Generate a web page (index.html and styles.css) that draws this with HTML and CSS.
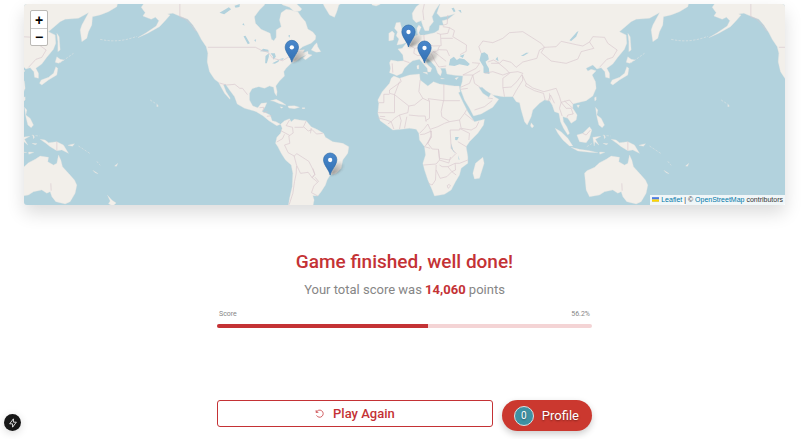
FILE: index.html
```html
<!DOCTYPE html>
<html lang="en">
<head>
  <meta charset="UTF-8">
  <meta name="viewport" content="width=device-width, initial-scale=1.0">
  <title>Game finished</title>
  <link rel="stylesheet" href="styles.css">
</head>
<body>
  <main class="page">
    <section class="map">
      <svg class="map-tiles" viewBox="72 12 2286 603" preserveAspectRatio="xMidYMid slice" role="img" aria-label="World map">
        <defs>
          <linearGradient id="pin-fill" x1="0" y1="0" x2="0" y2="1">
            <stop offset="0" stop-color="#4a88cb"/>
            <stop offset="1" stop-color="#3270b4"/>
          </linearGradient>
          <linearGradient id="shade-fill" x1="0" y1="1" x2="1" y2="0">
            <stop offset="0" stop-color="#444" stop-opacity=".6"/>
            <stop offset="1" stop-color="#555" stop-opacity=".05"/>
          </linearGradient>
          <filter id="soft"><feGaussianBlur stdDeviation="3"/></filter>

          <!-- tip of the pin is at 0,0 -->
          <g id="pin">
            <path d="M0 0 8-20Q16-38 32-38Q46-34 36-18Q26-3 0 0Z" fill="url(#shade-fill)" filter="url(#soft)"/>
            <path d="M0 0C-3-15-20-30-20-46A20 20 0 0 1 20-46C20-30 3-15 0 0Z" fill="url(#pin-fill)" stroke="#2f6ca8" stroke-width="2"/>
            <circle cy="-45" r="6.5" fill="#fff"/>
          </g>

          <g id="world">
            <!-- Americas -->
            <g transform="translate(540 0)">
              <g class="land">
                <path d="M-100 0L-115 22-103 38-110 48-85 58-72 52-62 62-70 78-100 98-125 113-95 100-60 80-43 62-28 45-35 42-20 40 5 50 25 58 40 75 55 98 65 118 80 140 85 160 83 185 90 215 105 238 117 247 125 262 135 280 151 298 152 294 140 275 132 255 138 253 150 270 165 290 173 312 195 325 230 335 250 347 268 362 280 370 292 377 303 373 290 365 278 362 272 345 258 338 248 335 258 318 262 308 245 310 235 323 220 318 210 300 210 280 218 266 238 260 255 265 270 258 282 262 285 278 291 288 293 275 289 258 300 243 315 228 313 215 320 205 335 190 350 183 365 172 381 164 370 174 378 179 398 165 386 162 385 154 370 158 375 149 358 150 370 140 395 130 408 118 409 107 400 96 385 87 378 65 365 50 355 35 335 30 320 28 305 38 300 60 305 80 290 90 290 112 283 122 276 118 272 100 245 88 228 70 225 50 240 30 255 15 260 0Z"/>
                <path d="M292 0 310 15 330 22 345 35 362 33 367 27 350 10 345 0ZM395 150L405 135 412 128 415 140 424 155 410 157ZM425 0L435 20 450 45 465 52 472 35 478 15 500 0ZM572 0 578 15 590 18 602 13 605 0ZM273 302L290 298 310 308 320 316 300 311 283 304ZM325 318L345 317 360 322 345 326 328 324ZM302 320 311 322 305 325ZM368 323 376 323 376 326 368 326Z"/>
                <path d="M303 373L315 362 330 356 335 365 345 357 360 360 380 362 395 380 412 388 432 400 438 412 460 425 490 430 508 440 505 460 490 480 485 505 470 520 452 525 443 540 438 555 425 575 415 588 400 587 404 600 400 620 326 620 330 595 338 560 340 520 335 495 318 480 305 460 295 440 288 430 292 412 303 400 308 385Z"/>
              </g>
              <path class="lake" d="M242 154 251 146 266 149 268 155ZM257 190 258 168 268 160 268 170 262 190ZM273 160 286 160 289 170 281 179 280 169ZM278 190 299 179 297 185 286 191ZM298 178 313 174 310 179ZM192 109 198 107 211 130 205 133ZM120 38 148 22 155 28 134 43ZM165 17 181 12 180 21 168 23ZM188 73 193 70 195 77ZM224 120 230 118 228 126ZM326 107 332 104 330 113Z"/>
              <path class="border" d="M1 0V50L18 57 35 74 49 94M85 142H228L246 151 266 157 280 175 309 182 331 169 342 153 360 153M120 249 141 255 166 253 181 265 189 265 204 284M240 323 253 322 250 333M252 338 264 335M262 349 276 347M330 360 320 377 339 382 341 399 328 408 331 430 315 435 326 458 344 468 352 461 388 484 399 506 406 523 398 533 386 517 363 520 351 495 344 468M351 498 350 521 345 545 340 580 329 614M304 392 330 406M380 363 372 380 386 393 398 389 411 402 430 400M345 382 372 382M395 384 393 400M407 532 417 544 403 558 396 578 415 588M400 505 406 523 398 533 414 546M292 426 309 416 315 403"/>
            </g>

            <!-- Europe, Africa and Asia -->
            <g transform="translate(1080 0)">
              <g class="land">
                <path d="M195 0L170 20 158 40 160 58 170 68 185 62 190 78 196 92 208 92 210 80 222 65 218 50 228 30 243 8 238 22 232 40 243 52 265 48 285 42 265 58 248 62 252 76 240 76 238 90 225 98 205 103 195 105 182 105 178 98 185 82 178 75 172 85 175 105 165 108 150 115 140 130 128 145 115 147 122 155 130 165 132 182 115 184 94 180 90 188 93 205 90 218 103 223 112 227 128 220 135 205 150 190 160 182 170 180 180 178 190 190 203 205 205 216 213 216 217 205 205 195 198 180 200 172 215 185 228 200 235 220 243 228 247 215 243 205 258 205 262 222 285 226 310 228 308 245 303 262 303 268 315 300 330 325 342 348 365 342 400 322 418 298 405 290 395 280 388 292 370 280 358 262 368 262 380 272 400 285 430 290 460 290 470 305 480 308 485 330 495 365 503 375 515 350 520 330 540 310 555 300 570 302 578 315 585 335 598 340 603 365 612 385 625 405 630 400 622 380 612 365 610 350 625 355 635 370 650 360 653 345 640 325 640 312 655 308 680 302 700 288 710 265 708 245 698 225 710 212 695 208 685 213 680 205 700 195 712 207 725 203 736 215 738 232 750 235 750 220 742 205 760 192 775 172 795 148 802 130 800 105 780 95 815 65 830 58 870 55 900 38 880 75 875 90 880 125 895 115 900 95 910 75 912 50 935 45 960 35 985 20 990 0Z"/>
                <path d="M103 228L120 235 150 225 180 222 182 240 205 258 222 245 240 252 262 255 285 258 299 258 302 275 297 278 312 310 325 335 340 358 345 365 375 358 372 375 355 400 330 425 320 440 325 470 325 490 305 505 300 525 288 545 275 570 255 583 225 588 218 570 205 540 195 510 190 490 198 465 195 440 180 420 178 400 170 388 150 385 125 388 100 390 80 375 62 362 55 340 58 310 55 300 68 275 90 250 95 235Z"/>
                <path d="M370 472L374 490 360 535 345 537 340 520 348 490ZM110 68L105 85 114 96 110 107 118 117 112 135 130 132 145 125 140 105 128 90 122 67ZM88 100L98 93 105 100 102 120 88 123ZM515 368L523 378 518 384 513 378ZM587 385L605 395 625 415 640 438 630 438 610 420 595 400ZM635 442L660 448 690 452 715 458 690 457 655 453ZM652 405L670 400 690 380 697 390 690 415 680 428 660 425ZM700 412L724 409 708 418 718 435 706 425 704 438ZM708 322L715 330 712 345 725 355 735 375 728 383 718 375 712 350ZM705 293 710 290 710 300 706 303ZM652 316 660 315 656 323ZM190 217 203 217 204 223ZM172 197 178 195 178 207 173 207ZM243 234 255 236 246 237ZM286 235 297 231 291 239ZM733 404 738 411 735 416ZM730 430 746 431 740 434ZM720 456 736 457 721 463Z"/>
              </g>
              <path class="lake" d="M268 196 272 178 283 170 292 180 300 175 315 178 331 192 325 198 300 193 285 198ZM365 160 360 180 372 200 372 218 390 222 388 205 382 195 378 185 388 178 385 164 375 157ZM300 168 315 163 310 174ZM408 178 414 170 417 184ZM484 168 500 158 508 158 492 168ZM630 121 652 96 657 93 650 110 635 123ZM287 411 298 411 293 421 287 420ZM275 430 281 450 287 461 283 456 275 445ZM297 466 300 480 297 478ZM276 25 283 23 288 34 283 37ZM296 31 304 30 306 40Z"/>
              <path class="border" d="M132 182 150 188M98 190 100 218M150 135 165 145 163 160 175 167 193 164M165 145 178 143 184 155M193 105 195 130 222 138 245 137 243 103 232 99M195 130 183 143M243 103 265 100 270 83 250 80M270 83 285 92 280 110 321 135 320 154 302 164M245 115 280 115M240 138 235 149 262 150 270 168M220 153 236 165 260 184M215 160 226 183 238 201 260 198M219 157 237 151M190 33 193 60M197 0 190 33M265 45 263 72 250 76M338 188 360 190 350 205 310 225 340 225 362 212M340 225 345 250 362 262M303 262 330 250 340 225M303 268 325 265M345 330 375 320 398 302M385 294 400 296M365 160 358 140 370 123 400 128 430 115 450 98 490 95 545 130 555 142 540 150 532 175 490 186 470 202 455 187 430 180 420 190 402 180 385 186M395 190 418 190 442 210 450 220 430 235 430 260 435 290M375 220 400 215 430 225 450 218 475 215 490 220 472 245 455 261 430 263M460 290 470 272 490 240 488 225 500 250 520 264 553 275 572 270 590 265 600 290 605 307 630 300 640 312M500 250 498 258 525 272 552 280M552 280 557 300M570 280 572 301M565 305 573 285 585 310M605 307 600 325 608 348M605 307 620 325 635 325 641 342 625 345 622 353M615 303 640 325M555 142 590 140 605 124 650 134 670 138 690 126 703 145 665 155 655 177 620 190 575 183 545 158ZM690 126 700 110 735 112 745 130 773 150 760 172 742 178 720 202M670 400 680 405 693 390"/>
              <path class="border" d="M122 235 125 245 90 270 90 280 105 284 105 338 55 338M120 245 105 284 148 318 165 315 190 295 178 275 182 240M58 308H73V283H90M190 295 210 304 210 355 198 362M210 304 206 296 253 302V252M253 302H301M252 302 245 335 247 350 270 365 300 360 315 340 322 328M315 340 342 362M300 360 305 385 335 390 350 382 358 365M270 365 255 370 235 380 212 388 205 372 195 385 180 400M148 318 145 338 120 345 105 355 95 365 80 360 55 353M95 365 103 387M120 345 125 362 120 387M142 350 135 385M148 345 178 348 197 348 200 365M182 404 195 402 216 393 215 405 205 430 195 440 212 445M212 390 216 410 200 434M216 410 205 430 218 447 237 448 240 480 230 492 192 495M237 448 240 475 270 480 290 460 275 445 272 390M272 390 300 390 302 385M295 425 320 440M240 480 268 489 273 471M230 495 228 540 218 555 207 550M230 510 242 535 262 530 277 515 265 500 248 500 240 495M265 500 287 490 300 490 325 480M287 490 288 510 277 515 290 525M263 557 269 553 273 558 266 565ZM300 385 330 400 328 420M61 349 77 350M85 372 95 365"/>
            </g>

            <!-- Japan, Oceania -->
            <g transform="translate(1620 0)">
              <g class="land">
                <path d="M135 520L142 512 165 502 180 488 200 478 215 468 240 472 238 485 255 495 265 490 270 465 277 480 282 500 300 520 318 540 325 555 320 580 305 605 290 612 262 605 250 590 245 575 235 580 220 570 195 575 180 585 150 590 140 570Z"/>
                <path d="M215 418L230 420 240 428 265 425 285 435 300 460 280 450 265 452 245 440 232 430ZM213 250L218 240 240 232 255 220 262 200 268 205 265 225 240 240 220 255ZM260 187L265 170 275 178 287 180 270 190ZM265 100L272 110 275 150 268 155 268 125ZM417 586 430 600 443 609 433 618 420 611 425 603ZM298 436 318 431 312 439ZM438 498 448 490 444 499ZM373 511 389 521 380 518ZM565 314 570 318 565 320Z"/>
              </g>
              <path class="border" d="M265 425V452M247 550 248 572"/>
              <path class="isles" d="M274 189 315 160M330 438 365 461M385 484 395 496M545 300 568 315M395 118C440 128 475 120 505 109M142 440 158 430M190 406 213 408"/>
            </g>
          </g>
        </defs>
        <use href="#world" x="-1713"/>
        <use href="#world"/>
        <use href="#world" x="1713"/>
        <use href="#pin" x="877" y="187"/>
        <use href="#pin" x="1227" y="141"/>
        <use href="#pin" x="1275" y="189"/>
        <use href="#pin" x="992" y="525"/>
      </svg>

      <div class="zoom">
        <button class="zoom-button" aria-label="Zoom in">+</button>
        <button class="zoom-button" aria-label="Zoom out">−</button>
      </div>

      <div class="attribution">
        <svg class="flag" viewBox="0 0 12 8" aria-hidden="true"><path fill="#4c7be1" d="M0 0h12v4H0z"/><path fill="#ffd500" d="M0 4h12v3H0z"/><path fill="#e0bc00" d="M0 7h12v1H0z"/></svg>
        <a href="#">Leaflet</a> | © <a href="#">OpenStreetMap</a> contributors
      </div>
    </section>

    <section class="result">
      <h1 class="result-title">Game finished, well done!</h1>
      <p class="result-text">Your total score was <strong>14,060</strong> points</p>

      <div class="score-labels">
        <label for="score">Score</label>
        <span>56.2%</span>
      </div>
      <progress class="score-bar" id="score" value="56.2" max="100"></progress>

      <div class="actions">
        <button class="play-button">
          <svg class="play-icon" viewBox="0 0 24 24" aria-hidden="true"><path d="M3 3v6h6M3.5 9A9.5 9.5 0 1 1 4 17"/></svg>
          Play Again
        </button>
        <a class="profile-button" href="#">
          <span class="level">0</span>
          Profile
        </a>
      </div>
    </section>
  </main>

  <button class="dev-button" aria-label="Open dev tools">
    <svg class="dev-icon" viewBox="0 0 24 24" aria-hidden="true"><path d="M13 2 4 14h7v8l9-12h-7z"/></svg>
  </button>
</body>
</html>
```
FILE: styles.css
```css
* {
    margin: 0;
    padding: 0;
    box-sizing: border-box;
}

body {
    background-color: #fff;
    font-family: "Roboto", sans-serif;
    color: #868686;
}

button {
    font-family: inherit;
    cursor: pointer;
}

.page {
    padding: 4px 21px 8px 24px;
}

/* Map */
.map {
    position: relative;
    height: 201px;
    border-radius: 3px;
    background-color: #b2d2dd;
    box-shadow: 0 8px 18px rgba(0, 0, 0, 0.14);
}

.map-tiles {
    display: block;
    width: 100%;
    height: 100%;
    border-radius: 3px;
}

.land {
    fill: #f2efea;
    stroke: #e3e5e2;
    stroke-width: 1;
    stroke-linejoin: round;
}

.lake {
    fill: #b2d2dd;
}

.border {
    fill: none;
    stroke: #d9c8cf;
    stroke-width: 2;
    stroke-linejoin: round;
}

.isles {
    fill: none;
    stroke: #dce3e2;
    stroke-width: 2;
    stroke-dasharray: 7 4;
}

.zoom {
    position: absolute;
    top: 6px;
    left: 6px;
    display: flex;
    flex-direction: column;
    width: 18px;
    border: 1px solid #bbb9b5;
    border-radius: 2px;
    background-color: #fff;
}

.zoom-button {
    height: 17px;
    border: none;
    background: none;
    font: bold 14px/16px "Liberation Sans", sans-serif;
    color: #000;
}

.zoom-button + .zoom-button {
    border-top: 1px solid #ccc;
}

.attribution {
    position: absolute;
    right: 0;
    bottom: 0;
    padding: 0 2px;
    background-color: rgba(255, 255, 255, 0.8);
    font: 7px/10px "Liberation Sans", sans-serif;
    color: #333;
}

.attribution a {
    color: #0078a8;
    text-decoration: none;
}

.flag {
    width: 7px;
    height: 5px;
}

/* Result */
.result {
    max-width: 375px;
    margin: 44px auto 0;
    text-align: center;
}

.result-title {
    font-size: 19px;
    line-height: 26px;
    font-weight: 500;
    color: #c43235;
}

.result-text {
    margin-top: 5px;
    font-size: 13px;
    line-height: 20px;
}

.result-text strong {
    font-weight: 700;
    color: #c43235;
}

.score-labels {
    display: flex;
    justify-content: space-between;
    margin-top: 9px;
    padding: 0 2px;
    font-size: 7px;
    line-height: 10px;
}

.score-bar {
    display: block;
    width: 100%;
    height: 4px;
    margin-top: 5px;
    border: none;
    border-radius: 2px;
    overflow: hidden;
    appearance: none;
    background-color: #f4d4d5;
}

.score-bar::-webkit-progress-bar {
    background-color: #f4d4d5;
}

.score-bar::-webkit-progress-value {
    background-color: #c43235;
}

.actions {
    display: flex;
    align-items: flex-start;
    gap: 9px;
    margin-top: 72px;
}

.play-button {
    flex: 1;
    display: flex;
    align-items: center;
    justify-content: center;
    gap: 9px;
    height: 27px;
    border: 1px solid #c43235;
    border-radius: 3px;
    background-color: #fff;
    font-size: 13px;
    font-weight: 500;
    color: #c43235;
}

.play-icon {
    width: 9px;
    height: 9px;
    fill: none;
    stroke: currentColor;
    stroke-width: 2;
}

.profile-button {
    display: flex;
    align-items: center;
    gap: 8px;
    height: 31px;
    padding: 0 13px 0 12px;
    border-radius: 16px;
    background-color: #cb382f;
    box-shadow: 0 3px 7px rgba(0, 0, 0, 0.2);
    font-size: 13px;
    color: #fff;
    text-decoration: none;
    text-shadow: 0 1px 2px rgba(0, 0, 0, 0.4);
}

.level {
    width: 20px;
    height: 20px;
    border: 1px solid #d9e2e3;
    border-radius: 50%;
    background-color: #3f91a3;
    font-size: 10px;
    line-height: 18px;
    text-align: center;
}

.dev-button {
    position: fixed;
    left: 4px;
    bottom: 8px;
    display: flex;
    align-items: center;
    justify-content: center;
    width: 17px;
    height: 17px;
    border: none;
    border-radius: 50%;
    background-color: #171717;
    box-shadow: 0 2px 8px rgba(0, 0, 0, 0.15);
}

.dev-icon {
    width: 10px;
    height: 10px;
    fill: none;
    stroke: #fff;
    stroke-width: 2;
    stroke-linejoin: round;
}
```
